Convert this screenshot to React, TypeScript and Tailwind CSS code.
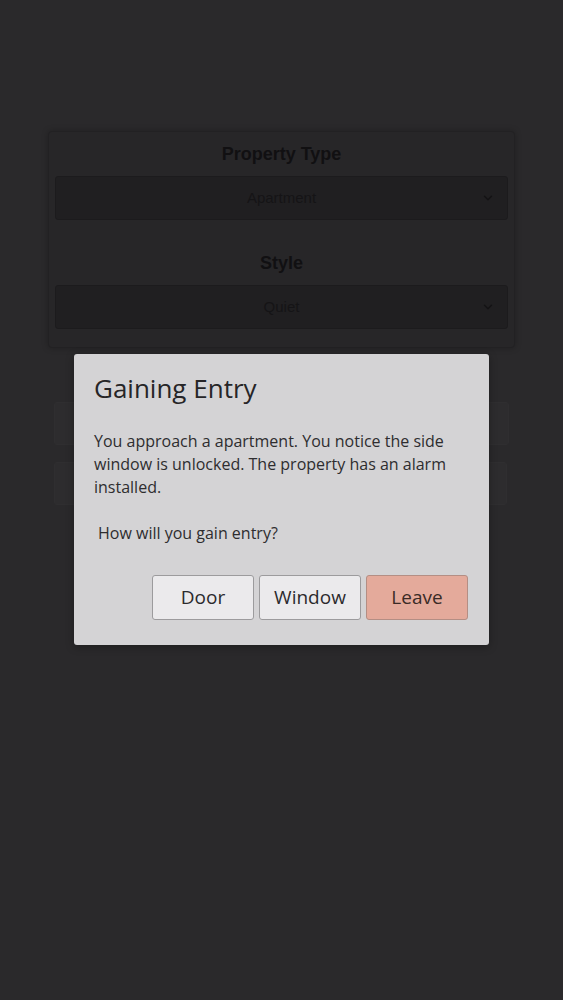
import { ChevronDown } from 'lucide-react';

function DimSelect({ value }: { value: string }) {
  return (
    <div className="relative flex h-[44px] items-center justify-center rounded-[3px] border border-[#1c1b1d] bg-[#201f21] text-[15px] text-[#151416]">
      <span>{value}</span>
      <ChevronDown className="absolute right-[12px] h-[14px] w-[14px] text-[#141315]" strokeWidth={2.5} />
    </div>
  );
}

export default function App() {
  return (
    <div
      className="relative h-[1000px] w-full overflow-hidden bg-[#2a292b]"
      style={{ fontFamily: '"Liberation Sans", Arial, sans-serif' }}
    >
      <div className="px-[48px] pt-[131px]">
        <div className="rounded-[4px] border border-[#222123] bg-[#272628] px-[6px] pb-[18px] pt-[9px] shadow-[0_0_6px_rgba(0,0,0,0.25)]">
          <h3 className="mb-[8px] text-center text-[18px] font-bold text-[#111012]">Property Type</h3>
          <DimSelect value="Apartment" />
          <h3 className="mb-[8px] mt-[30px] text-center text-[18px] font-bold text-[#111012]">Style</h3>
          <DimSelect value="Quiet" />
        </div>

        <div className="mt-[54px] flex flex-col gap-[17px] px-[6px]">
          <div className="h-[43px] rounded-[3px] border border-[#2f2e30] bg-[#2d2c2e]" />
          <div className="h-[43px] w-[453px] rounded-[3px] border border-[#2f2e30] bg-[#2d2c2e]" />
        </div>
      </div>

      <div
        className="absolute left-[74px] top-[354px] w-[415px] rounded-[3px] bg-[#d4d3d5] px-[20px] pb-[25px] pt-[16px] shadow-[0_2px_8px_rgba(0,0,0,0.3)]"
        style={{ fontFamily: '"Open Sans", "Noto Sans", sans-serif' }}
      >
        <h2 className="text-[26px] leading-[36px] text-[#262527]">Gaining Entry</h2>
        <p className="mt-[24px] text-[16px] leading-[23px] text-[#2e2d2f]">
          You approach a apartment. You notice the side window is unlocked. The property has an alarm installed.
        </p>
        <p className="mt-[23px] pl-[4px] text-[16px] leading-[23px] text-[#2e2d2f]">How will you gain entry?</p>
        <div className="mt-[30px] flex justify-end gap-[5px] pr-[1px]">
          <button className="h-[45px] w-[102px] rounded-[3px] border border-[#9c9b9d] bg-[#ebeaec] text-[19px] text-[#2b2a2c]">
            Door
          </button>
          <button className="h-[45px] w-[102px] rounded-[3px] border border-[#9c9b9d] bg-[#ebeaec] text-[19px] text-[#2b2a2c]">
            Window
          </button>
          <button className="h-[45px] w-[102px] rounded-[3px] border border-[#b48e84] bg-[#e4aa9b] text-[19px] text-[#3a2a26]">
            Leave
          </button>
        </div>
      </div>
    </div>
  );
}
